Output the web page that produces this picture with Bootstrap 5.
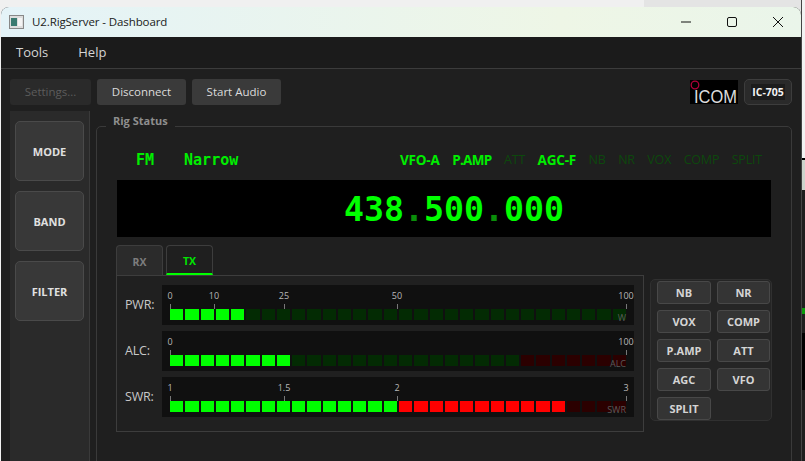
<!DOCTYPE html>
<html lang="en">
<head>
  <meta charset="UTF-8" />
  <title>U2.RigServer - Dashboard</title>
  <link href="https://cdn.jsdelivr.net/npm/bootstrap@5.3.3/dist/css/bootstrap.min.css" rel="stylesheet" />
  <style>
    html, body {
      height: 100%;
      margin: 0;
      overflow: hidden;
      background: #e9e9e9;
      font-family: "Open Sans", "Noto Sans", sans-serif;
    }
    .desk { width: 805px; height: 461px; padding: 7px 0 0 1px; overflow: hidden; background: linear-gradient(90deg, #f0f0f0 644px, #e4e4e4 644px); }
    .win { width: 800px; height: 454px; flex: none; border-radius: 8px 8px 0 0; overflow: hidden; background: #1f1f1f; color: #ddd; display: flex; flex-direction: column; }
    .behind { width: 4px; flex: none; margin-top: -7px; background: #1e1e1e; border-left: 1px solid #444; }
    .behind div:nth-child(1) { height: 158px; background: #f2f2f2; }
    .behind div:nth-child(2) { height: 2px; background: #000; }
    .behind div:nth-child(3) { height: 30px; background: #ccd4cc; }
    .behind div:nth-child(4) { height: 118px; }
    .behind div:nth-child(5) { height: 6px; background: #0c9a0c; }
    .behind div:nth-child(6) { height: 19px; }
    .behind div:nth-child(7) { height: 57px; background: #000; }
    .titlebar { height: 30px; flex: none; background: linear-gradient(90deg, #e4f3f8, #eef6e6 70%, #eaf5ea); color: #1a1a1a; font-size: 11.5px; letter-spacing: -.1px; padding-left: 8px; }
    .winbtns { margin-left: auto; }
    .winbtns svg { display: block; margin-right: 18px; margin-left: 18px; }
    .menubar { height: 32px; flex: none; background: #1b1b1b; border-bottom: 1px solid #3c3c3c; font-size: 13px; padding-left: 15px; gap: 30px; color: #d5d5d5; }
    .toolbar { flex: none; height: 42px; padding: 10px 9px 0 9px; gap: 6px; }
    .tbtn { height: 26px; background: #3a3a3a; color: #dcdcdc; border: 0; border-radius: 3px; font-size: 11.5px; line-height: 26px; text-align: center; }
    .tbtn.off { background: #2a2a2a; color: #5c5c5c; width: 81px; }
    .tbtn.w89 { width: 89px; }
    .logo { width: 48px; height: 24px; background: #000; display: block; margin-left: auto; margin-top: 1px; overflow: visible; }
    .model { width: 48px; height: 26px; background: #2a2a2a; border: 1px solid #3d3d3d; border-radius: 5px; font-size: 10.5px; font-weight: 700; color: #f2f2f2; text-align: center; line-height: 24px; }
    .model span { background: #1c1c1c; padding: 1px 1px; }
    .mainrow { flex: 1; min-height: 0; padding-left: 9px; gap: 6px; }
    .sidebar { width: 80px; flex: none; background: #2a2a2a; border-right: 1px solid #3a3a3a; padding: 10px 5px; gap: 10px; }
    .sidebtn { height: 60px; background: #383838; border: 1px solid #4a4a4a; border-radius: 5px; font-size: 11px; font-weight: 700; color: #e0e0e0; padding-top: 2px; }
    .rigwrap { position: relative; width: 696px; padding-top: 15px; }
    .rigbox { height: 400px; border: 1px solid #3a3a3a; border-radius: 5px; padding: 21px 20px 0 20px; }
    .riglegend { position: absolute; left: 10px; top: 2px; padding: 0 7px; background: #1f1f1f; font-size: 11px; font-weight: 700; color: #8e8e8e; line-height: 15px; }
    .statusline { height: 24px; font-size: 13.5px; font-weight: 700; color: #00ee00; padding: 0 9px 0 19px; gap: 12.5px; letter-spacing: -.2px; }
    .statusline .mono { font-family: "DejaVu Sans Mono", monospace; font-weight: 700; font-size: 15px; letter-spacing: 0; }
    .statusline .gapped { margin-left: 17.5px; }
    .statusline .tight { letter-spacing: -.7px; }
    .statusline .dim { color: #0d480d; font-weight: 400; font-size: 12.5px; }
    .freq { margin-top: 8px; height: 57px; padding-left: 20px; background: #000; color: #00ff00; font-family: "DejaVu Sans Mono", monospace; font-weight: 700; font-size: 33.2px; text-align: center; line-height: 59px; }
    .freq i { font-style: normal; color: #0a8f0a; }
    .lowerrow { margin: 8px 0 0 -1px; gap: 6px; }
    .tabcol { width: 528px; flex: none; }
    .tabstrip { height: 31px; gap: 3px; border-bottom: 1px solid #3d3d3d; }
    .rigtab { width: 47px; height: 30px; background: #2b2b2b; border: 1px solid #3d3d3d; border-bottom: 0; border-radius: 4px 4px 0 0; color: #7d7d7d; font-size: 10.5px; font-weight: 700; text-align: center; line-height: 33px; }
    .rigtab.on { background: #1f1f1f; color: #00e600; border-bottom: 2px solid #00ff00; line-height: 31px; }
    .tabbody { height: 156px; border: 1px solid #3d3d3d; border-top: 0; padding: 9px 8px 0 8px; gap: 6px; background: #202020; }
    .meterrow { height: 40px; gap: 4px; }
    .mlabel { width: 33px; padding-top: 1px; font-size: 12.5px; color: #c8c8c8; flex: none; letter-spacing: -.2px; white-space: nowrap; }
    .meter { position: relative; width: 472px; height: 40px; background: #101010; overflow: hidden; flex: none; }
    .tick { position: absolute; top: 19px; width: 1px; height: 5px; background: #777; }
    .ticktxt { position: absolute; top: 4px; font-size: 9px; line-height: 14px; color: #b8b8b8; transform: translateX(-50%); }
    .munit { position: absolute; right: 8px; top: 27px; font-size: 9px; line-height: 12px; color: #5a5a5a; }
    .segs { position: absolute; left: 8px; top: 24px; display: flex; gap: 2px; }
    .segs span { width: 13.27px; height: 11px; display: block; }
    .g1 { background: #00ff00; } .g0 { background: #032b03; } .r1 { background: #ff0000; } .r0 { background: #2b0000; }
    .funcbox { width: 122px; height: 142px; flex: none; margin-top: 34px; border: 1px solid #303030; border-radius: 5px; background: #252525; padding: 1px 6px; display: grid; grid-template-columns: 54px 53px; column-gap: 6px; row-gap: 6px; grid-auto-rows: 23px; }
    .fbtn { background: #343434; border: 1px solid #484848; border-radius: 3px; font-size: 11px; font-weight: 700; color: #d4d4d4; text-align: center; line-height: 21px; }
  </style>
</head>
<body>
<div class="desk d-flex">
  <div class="win">
    <div class="titlebar d-flex align-items-center">
      <svg width="15" height="14" viewBox="0 0 15 14" class="me-2"><rect x=".5" y=".5" width="14" height="13" fill="#ddd" stroke="#888"/><rect x="2" y="3" width="6" height="8" fill="#3a7a70"/><rect x="9" y="3" width="4" height="8" fill="#f4f4f4"/></svg>
      <span>U2.RigServer - Dashboard</span>
      <div class="winbtns d-flex align-items-center">
        <svg width="10" height="10" viewBox="0 0 10 10"><path d="M0 5h10" stroke="#111"/></svg>
        <svg width="10" height="10" viewBox="0 0 10 10"><rect x=".5" y=".5" width="9" height="9" rx="1.5" fill="none" stroke="#111"/></svg>
        <svg width="10" height="10" viewBox="0 0 10 10"><path d="M0 0l10 10M10 0L0 10" stroke="#111"/></svg>
      </div>
    </div>
    <div class="menubar d-flex align-items-center">
      <span>Tools</span><span>Help</span>
    </div>
    <div class="toolbar d-flex align-items-start">
      <div class="tbtn off">Settings...</div>
      <div class="tbtn w89">Disconnect</div>
      <div class="tbtn w89">Start Audio</div>
      <svg class="logo" viewBox="0 0 48 24"><circle cx="5" cy="5" r="3.8" fill="none" stroke="#b0003a" stroke-width="1.3"/><text x="4" y="23" font-family="Liberation Sans" font-size="17.5" fill="#dcdcdc" textLength="43" lengthAdjust="spacingAndGlyphs">ICOM</text></svg>
      <div class="model"><span>IC-705</span></div>
    </div>
    <div class="mainrow d-flex">
      <div class="sidebar d-flex flex-column">
        <div class="sidebtn d-flex align-items-center justify-content-center">MODE</div>
        <div class="sidebtn d-flex align-items-center justify-content-center">BAND</div>
        <div class="sidebtn d-flex align-items-center justify-content-center">FILTER</div>
      </div>
      <div class="rigwrap">
        <div class="riglegend">Rig Status</div>
        <div class="rigbox">
          <div class="statusline d-flex align-items-center">
            <span class="mono">FM</span><span class="mono gapped">Narrow</span>
            <span class="ms-auto">VFO-A</span><span class="tight">P.AMP</span><span class="dim">ATT</span><span>AGC-F</span><span class="dim">NB</span><span class="dim">NR</span><span class="dim">VOX</span><span class="dim">COMP</span><span class="dim">SPLIT</span>
          </div>
          <div class="freq">438<i>.</i>500<i>.</i>000</div>
          <div class="lowerrow d-flex align-items-start">
            <div class="tabcol">
              <div class="tabstrip d-flex">
                <div class="rigtab">RX</div>
                <div class="rigtab on">TX</div>
              </div>
              <div class="tabbody d-flex flex-column" id="meters"></div>
            </div>
            <div class="funcbox">
              <div class="fbtn">NB</div><div class="fbtn">NR</div>
              <div class="fbtn">VOX</div><div class="fbtn">COMP</div>
              <div class="fbtn">P.AMP</div><div class="fbtn">ATT</div>
              <div class="fbtn">AGC</div><div class="fbtn">VFO</div>
              <div class="fbtn">SPLIT</div>
            </div>
          </div>
        </div>
      </div>
    </div>
  </div>
  <div class="behind"><div></div><div></div><div></div><div></div><div></div><div></div><div></div></div>
</div>
<script>
  // meter rows: label, tick marks, unit, and how the 30 segments are lit
  const meters = [
    { label: 'PWR:', unit: 'W', ticks: [['0', 0], ['10', 44], ['25', 114], ['50', 227], ['100', 456]], on: 5, redFrom: 99 },
    { label: 'ALC:', unit: 'ALC', ticks: [['0', 0], ['100', 456]], on: 8, redFrom: 23 },
    { label: 'SWR:', unit: 'SWR', ticks: [['1', 0], ['1.5', 114], ['2', 227], ['3', 456]], on: 26, redFrom: 15 }
  ];
  const box = document.getElementById('meters');
  meters.forEach(m => {
    let segs = '';
    for (let i = 0; i < 30; i++) {
      const red = i >= m.redFrom;
      const lit = i < m.on;
      segs += `<span class="${red ? (lit ? 'r1' : 'r0') : (lit ? 'g1' : 'g0')}"></span>`;
    }
    const ticks = m.ticks.map(t =>
      `<div class="ticktxt" style="left:${8 + t[1]}px">${t[0]}</div><div class="tick" style="left:${8 + t[1]}px"></div>`
    ).join('');
    box.insertAdjacentHTML('beforeend',
      `<div class="meterrow d-flex align-items-center"><div class="mlabel">${m.label}</div>
       <div class="meter">${ticks}<div class="segs">${segs}</div><div class="munit">${m.unit}</div></div></div>`);
  });
</script>
<script src="https://cdn.jsdelivr.net/npm/bootstrap@5.3.3/dist/js/bootstrap.bundle.min.js"></script>
</body>
</html>
